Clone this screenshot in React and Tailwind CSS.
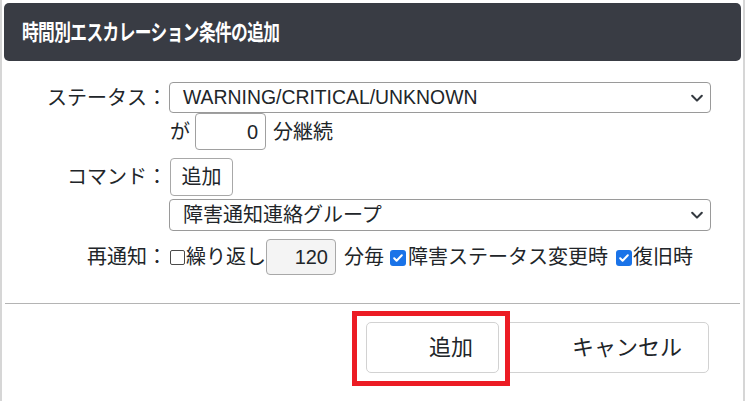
import React from "react";

const jp = { fontFamily: '"Liberation Sans", "Noto Sans CJK JP", sans-serif' };

function Chevron() {
  return (
    <svg width="14" height="14" viewBox="0 0 16 16" className="shrink-0">
      <path d="M2.5 5.5l5.5 5.5 5.5-5.5" fill="none" stroke="#343a40" strokeWidth="2.4" strokeLinecap="round" strokeLinejoin="round" />
    </svg>
  );
}

function Checked() {
  return (
    <span className="inline-flex h-[16px] w-[16px] shrink-0 items-center justify-center rounded-[3px] bg-[#1a73e8]">
      <svg width="12" height="12" viewBox="0 0 12 12">
        <path d="M2.2 6.3l2.4 2.4 5.2-5.4" fill="none" stroke="#fff" strokeWidth="2" strokeLinecap="round" strokeLinejoin="round" />
      </svg>
    </span>
  );
}

export default function App() {
  return (
    <div className="relative h-[401px] w-[745px] overflow-hidden bg-white text-[#212529]" style={jp}>
      <div className="h-full border-x-2 border-[#d6d6d6] px-[2px] pt-[3px]">
        <div className="flex h-[58px] items-center rounded-[5px] bg-[#393c44] pl-[18px]">
          <span className="origin-left scale-x-[0.76] whitespace-nowrap text-[22px] font-bold tracking-[-0.8px] text-white">時間別エスカレーション条件の追加</span>
        </div>

        <div className="mt-[21px] flex flex-col text-[20px] leading-none">
          <div className="flex items-start gap-[2px]">
            <div className="flex h-[31px] w-[163px] items-center justify-end">ステータス：</div>
            <div className="flex flex-col">
              <div className="flex h-[31px] w-[542px] items-center justify-between rounded-[4px] border border-[#9a9a9a] pl-[13px] pr-[6px]">
                <span className="text-[19.4px]">WARNING/CRITICAL/UNKNOWN</span>
                <Chevron />
              </div>
              <div className="ml-px flex h-[37px] items-center">
                <span>が</span>
                <div className="ml-[5px] flex h-[37px] w-[71px] items-center justify-end rounded-[4px] border border-[#a0a0a0] pr-[7px]">0</div>
                <span className="ml-[7px]">分継続</span>
              </div>
            </div>
          </div>

          <div className="mt-[8px] flex items-start gap-[2px]">
            <div className="flex h-[38px] w-[163px] items-center justify-end">コマンド：</div>
            <div className="flex flex-col">
              <div className="ml-px flex h-[38px] w-[63px] items-center justify-center rounded-[4px] border border-[#a8a8a8]">追加</div>
              <div className="mt-[3px] flex h-[32px] w-[542px] items-center justify-between rounded-[4px] border border-[#9a9a9a] pl-[13px] pr-[6px]">
                <span>障害通知連絡グループ</span>
                <Chevron />
              </div>
            </div>
          </div>

          <div className="mt-[8px] flex items-center gap-[2px]">
            <div className="flex h-[36px] w-[163px] items-center justify-end">再通知：</div>
            <div className="ml-px flex items-center">
              <span className="h-[15px] w-[15px] shrink-0 rounded-[2px] border-[1.5px] border-[#4a4a4a]" />
              <span className="ml-[1px]">繰り返し</span>
              <div className="flex h-[36px] w-[70px] items-center justify-end rounded-[4px] border border-[#a8a8a8] bg-[#f4f4f4] pr-[7px]">120</div>
              <span className="ml-[8px]">分毎</span>
              <span className="ml-[6px]"><Checked /></span>
              <span className="ml-[2px]">障害ステータス変更時</span>
              <span className="ml-[8px]"><Checked /></span>
              <span className="ml-px">復旧時</span>
            </div>
          </div>
        </div>

        <div className="mx-[1px] mt-[28px] h-px bg-[#b4b4b4]" />

        <div className="mt-[18px] flex justify-end gap-[6px] pr-[32px] text-[22px] leading-none">
          <div className="flex h-[51px] w-[133px] items-center rounded-[5px] border border-[#d2d2d2] pl-[62px]">追加</div>
          <div className="flex h-[51px] w-[204px] items-center rounded-[5px] border border-[#d2d2d2] pl-[66px]">キャンセル</div>
        </div>
      </div>

      <div className="absolute left-[352px] top-[311px] h-[75px] w-[158px] border-[5px] border-[#ec1c24]" />
    </div>
  );
}
